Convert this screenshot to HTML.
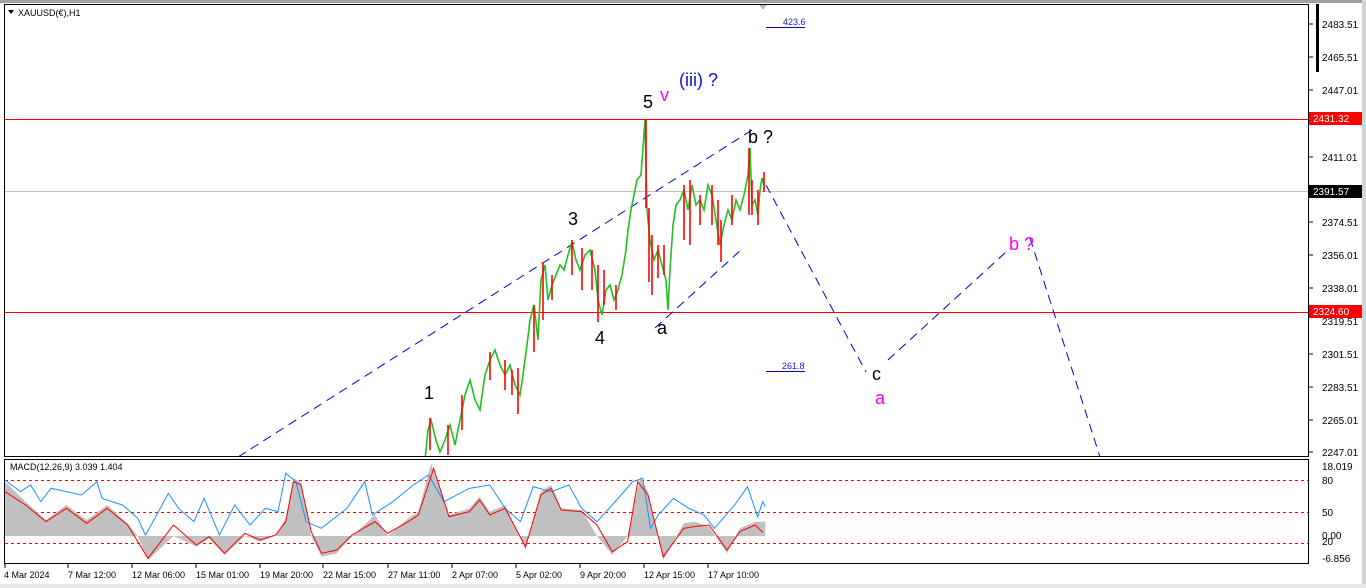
<!DOCTYPE html>
<html><head><meta charset="utf-8"><style>
body{margin:0;width:1366px;height:588px;background:#fff;overflow:hidden;font-family:"Liberation Sans",sans-serif}
svg{position:absolute;left:0;top:0}
</style></head><body>
<svg width="1366" height="588" viewBox="0 0 1366 588" font-family="Liberation Sans, sans-serif">
<rect x="0" y="0" width="1366" height="588" fill="#fff"/>
<rect x="0" y="0" width="1366" height="3" fill="#a0a0a0"/>
<rect x="1362" y="0" width="4" height="588" fill="#d4d4d4"/>
<rect x="0" y="584" width="1366" height="4" fill="#e8e8e8"/>
<rect x="4.5" y="4.5" width="1304" height="452" fill="none" stroke="#000"/>
<rect x="4.5" y="459.5" width="1304" height="104" fill="none" stroke="#000"/>
<rect x="1316" y="4" width="3" height="68" fill="#000"/>
<polygon points="759,5 767,5 763,10" fill="#bbb"/>
<line x1="5" y1="119.5" x2="1308" y2="119.5" stroke="#f00"/>
<line x1="5" y1="312.5" x2="1308" y2="312.5" stroke="#f00"/>
<line x1="5" y1="191.5" x2="1308" y2="191.5" stroke="#c0c0c0"/>
<text x="783" y="25" font-size="9" fill="#2020c0">423.6</text>
<line x1="766" y1="27.5" x2="805" y2="27.5" stroke="#0000c8"/>
<text x="782" y="369" font-size="9" fill="#2020c0">261.8</text>
<line x1="766" y1="371.5" x2="805" y2="371.5" stroke="#0000c8"/>
<g stroke="#0000d0" stroke-width="1" stroke-dasharray="9,6" fill="none">
<line x1="238" y1="457" x2="752" y2="130"/>
<line x1="655" y1="328" x2="742" y2="249"/>
<line x1="766" y1="185" x2="866" y2="372"/>
<line x1="888" y1="360" x2="1006" y2="252"/>
<line x1="1030" y1="238" x2="1100" y2="457"/>
</g>
<clipPath id="cp"><rect x="5" y="5" width="1303" height="451"/></clipPath>
<g clip-path="url(#cp)" fill="none" stroke-width="1.6">
<polyline stroke="#22c022" points="425,460 428,430 431,420 436,440 440,452 445,440 450,425 455,445 460,420 465,395 470,380 475,400 480,410 485,375 490,360 495,350 500,365 505,375 510,365 515,385 520,395 523,375 527,345 530,320 534,305 538,340 541,280 545,265 548,300 552,285 556,275 560,265 564,270 568,255 572,242 576,260 580,270 585,255 590,250 595,270 598,300 602,315 606,290 610,285 614,300 618,290 622,275 626,250 628,230 631,210 634,195 637,180 641,175 645,120 647,210 650,240 654,260 658,250 662,265 666,280 668,310 670,270 673,225 676,205 680,200 684,190 688,210 692,185 696,205 700,200 704,210 708,185 712,195 716,220 720,245 724,225 728,210 732,220 736,200 740,210 744,195 748,175 750,148 752,205 755,200 758,215 760,190 762,178 764,185"/>
<g stroke="#ff0000" stroke-width="1.6">
<line x1="430" y1="418" x2="430" y2="450"/><line x1="448" y1="425" x2="448" y2="455"/>
<line x1="462" y1="395" x2="462" y2="430"/><line x1="490" y1="352" x2="490" y2="380"/>
<line x1="505" y1="360" x2="505" y2="390"/><line x1="512" y1="370" x2="512" y2="395"/>
<line x1="518" y1="368" x2="518" y2="414"/><line x1="534" y1="305" x2="534" y2="352"/>
<line x1="543" y1="262" x2="543" y2="320"/><line x1="552" y1="275" x2="552" y2="300"/>
<line x1="572" y1="240" x2="572" y2="275"/><line x1="582" y1="248" x2="582" y2="290"/>
<line x1="592" y1="250" x2="592" y2="290"/><line x1="598" y1="265" x2="598" y2="322"/>
<line x1="604" y1="270" x2="604" y2="305"/><line x1="616" y1="285" x2="616" y2="310"/>
<line x1="646" y1="120" x2="646" y2="208"/><line x1="649" y1="208" x2="649" y2="282"/>
<line x1="652" y1="235" x2="652" y2="295"/><line x1="658" y1="245" x2="658" y2="278"/>
<line x1="664" y1="245" x2="664" y2="275"/><line x1="684" y1="185" x2="684" y2="240"/>
<line x1="690" y1="180" x2="690" y2="245"/><line x1="700" y1="195" x2="700" y2="225"/>
<line x1="712" y1="185" x2="712" y2="225"/><line x1="718" y1="200" x2="718" y2="245"/>
<line x1="721" y1="220" x2="721" y2="262"/><line x1="732" y1="195" x2="732" y2="225"/>
<line x1="749" y1="148" x2="749" y2="215"/><line x1="752" y1="180" x2="752" y2="215"/>
<line x1="758" y1="190" x2="758" y2="225"/><line x1="764" y1="172" x2="764" y2="192"/>
</g>
</g>
<g font-size="18">
<text x="424" y="399" fill="#000">1</text>
<text x="568" y="225" fill="#000">3</text>
<text x="595" y="344" fill="#000">4</text>
<text x="643" y="108" fill="#000">5</text>
<text x="660" y="101" fill="#ff00ff">v</text>
<text x="679" y="86" fill="#1010e0">(iii) ?</text>
<text x="657" y="334" fill="#000">a</text>
<text x="748" y="143" fill="#000">b ?</text>
<text x="872" y="380" fill="#000">c</text>
<text x="875" y="404" fill="#ff00ff">a</text>
<text x="1009" y="250" fill="#ff00ff">b ?</text>
</g>
<g font-size="10" fill="#000">
<text x="1322" y="28">2483.51</text>
<text x="1322" y="61">2465.51</text>
<text x="1322" y="94">2447.01</text>
<text x="1322" y="161">2411.01</text>
<text x="1322" y="226">2374.51</text>
<text x="1322" y="259">2356.01</text>
<text x="1322" y="292">2338.01</text>
<text x="1322" y="325">2319.51</text>
<text x="1322" y="358">2301.51</text>
<text x="1322" y="391">2283.51</text>
<text x="1322" y="424">2265.01</text>
<text x="1322" y="456">2247.01</text>
<text x="1322" y="470">18.019</text>
<text x="1322" y="484">80</text>
<text x="1322" y="516">50</text>
<text x="1322" y="539">0.00</text>
<text x="1322" y="545">20</text>
<text x="1322" y="562">-6.856</text>
</g>
<g stroke="#000">
<line x1="1309" y1="24" x2="1313" y2="24"/><line x1="1309" y1="57" x2="1313" y2="57"/><line x1="1309" y1="90" x2="1313" y2="90"/>
<line x1="1309" y1="157" x2="1313" y2="157"/><line x1="1309" y1="222" x2="1313" y2="222"/><line x1="1309" y1="255" x2="1313" y2="255"/>
<line x1="1309" y1="288" x2="1313" y2="288"/><line x1="1309" y1="354" x2="1313" y2="354"/><line x1="1309" y1="387" x2="1313" y2="387"/>
<line x1="1309" y1="420" x2="1313" y2="420"/><line x1="1309" y1="452" x2="1313" y2="452"/>
</g>
<rect x="1309" y="112" width="53" height="13" fill="#f00"/>
<text x="1313" y="122" font-size="10" fill="#fff">2431.32</text>
<rect x="1309" y="185" width="53" height="13" fill="#000"/>
<text x="1313" y="195" font-size="10" fill="#fff">2391.57</text>
<rect x="1309" y="305" width="53" height="13" fill="#f00"/>
<text x="1313" y="315" font-size="10" fill="#fff">2324.60</text>
<text x="18" y="16" font-size="9" fill="#000">XAUUSD(€),H1</text>
<polygon points="8,10 14,10 11,14" fill="#000"/>
<text x="10" y="470" font-size="9" fill="#000">MACD(12,26,9) 3.039 1.404</text>
<g stroke="#f00" stroke-dasharray="3,3">
<line x1="5" y1="480.5" x2="1308" y2="480.5"/>
<line x1="5" y1="512.5" x2="1308" y2="512.5"/>
<line x1="5" y1="543.5" x2="1308" y2="543.5"/>
</g>
<g transform="translate(0,455) scale(0.5102,0.3333)" fill="none">
<polygon fill="#c0c0c0" points="10,243 10,80 50,140 90,195 130,150 170,195 210,150 250,205 270,243 290,315 340,243 385,275 410,250 440,300 480,243 510,260 540,243 560,190 575,70 590,80 610,243 630,305 660,295 690,243 735,180 760,243 800,190 820,170 845,25 880,180 920,160 940,125 960,170 990,150 1030,285 1060,110 1080,90 1100,160 1140,165 1170,243 1200,300 1230,243 1255,65 1270,110 1300,315 1340,205 1360,200 1390,215 1425,295 1450,220 1480,200 1500,200 1500,243"/>
<polyline stroke="#1e90ff" stroke-width="1" vector-effect="non-scaling-stroke" points="10,75 40,110 60,90 80,140 100,100 130,110 160,120 190,80 200,130 240,150 270,190 285,240 300,200 330,115 350,160 380,200 400,130 430,240 460,150 490,210 520,160 545,170 560,55 580,80 600,200 630,220 680,160 715,80 730,180 770,140 810,90 840,60 870,140 920,100 960,90 990,160 1020,200 1045,95 1080,110 1115,90 1140,160 1170,200 1200,150 1240,80 1260,70 1275,220 1290,180 1320,130 1350,160 1380,180 1400,220 1440,150 1465,95 1485,185 1495,140 1500,155"/>
<polyline stroke="#f00" stroke-width="1" vector-effect="non-scaling-stroke" points="10,110 50,150 90,200 130,160 170,205 210,160 250,210 290,310 340,210 385,270 410,245 440,295 480,235 510,255 540,240 560,200 575,80 590,90 610,230 630,295 660,285 690,240 735,200 760,235 800,200 820,180 850,40 880,185 920,170 940,135 960,180 990,160 1030,275 1060,120 1080,100 1100,165 1140,170 1170,210 1200,290 1230,260 1250,80 1270,120 1300,305 1340,220 1360,215 1390,210 1425,285 1450,230 1480,210 1495,232"/>
</g>
<g font-size="9" fill="#000">
<text x="4" y="578">4 Mar 2024</text>
<text x="68" y="578">7 Mar 12:00</text>
<text x="132" y="578">12 Mar 06:00</text>
<text x="196" y="578">15 Mar 01:00</text>
<text x="260" y="578">19 Mar 20:00</text>
<text x="323" y="578">22 Mar 15:00</text>
<text x="388" y="578">27 Mar 11:00</text>
<text x="452" y="578">2 Apr 07:00</text>
<text x="516" y="578">5 Apr 02:00</text>
<text x="580" y="578">9 Apr 20:00</text>
<text x="644" y="578">12 Apr 15:00</text>
<text x="708" y="578">17 Apr 10:00</text>
</g>
<g stroke="#000">
<line x1="5" y1="564" x2="5" y2="568"/><line x1="68" y1="564" x2="68" y2="568"/><line x1="132" y1="564" x2="132" y2="568"/>
<line x1="196" y1="564" x2="196" y2="568"/><line x1="260" y1="564" x2="260" y2="568"/><line x1="323" y1="564" x2="323" y2="568"/>
<line x1="388" y1="564" x2="388" y2="568"/><line x1="452" y1="564" x2="452" y2="568"/><line x1="516" y1="564" x2="516" y2="568"/>
<line x1="580" y1="564" x2="580" y2="568"/><line x1="644" y1="564" x2="644" y2="568"/><line x1="708" y1="564" x2="708" y2="568"/>
</g>
</svg>
</body></html>
